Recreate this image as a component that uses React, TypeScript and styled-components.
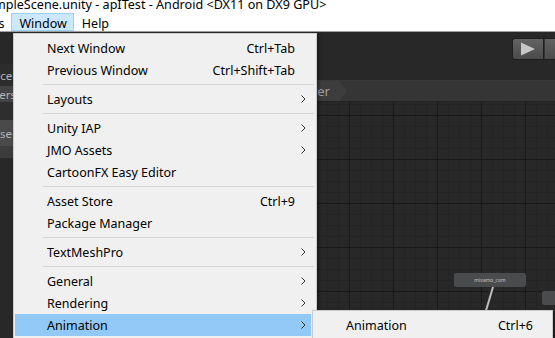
import styled, {createGlobalStyle} from 'styled-components';

const GlobalStyle = createGlobalStyle`
	html, body {
		margin: 0;
		padding: 0;
	}
	body {
		width: 555px;
		height: 338px;
		overflow: hidden;
		font-family: 'Noto Sans', 'Liberation Sans', sans-serif;
		font-size: 12.5px;
		color: #000;
	}
`;

interface MenuEntry {
	label?: string;
	shortcut?: string;
	sub?: boolean;
	active?: boolean;
	separator?: boolean;
}

const windowMenu: MenuEntry[] = [
	{label: 'Next Window', shortcut: 'Ctrl+Tab'},
	{label: 'Previous Window', shortcut: 'Ctrl+Shift+Tab'},
	{separator: true},
	{label: 'Layouts', sub: true},
	{separator: true},
	{label: 'Unity IAP', sub: true},
	{label: 'JMO Assets', sub: true},
	{label: 'CartoonFX Easy Editor'},
	{separator: true},
	{label: 'Asset Store', shortcut: 'Ctrl+9'},
	{label: 'Package Manager'},
	{separator: true},
	{label: 'TextMeshPro', sub: true},
	{separator: true},
	{label: 'General', sub: true},
	{label: 'Rendering', sub: true},
	{label: 'Animation', sub: true, active: true},
];

const Page = styled.div`
	position: relative;
	width: 555px;
	height: 338px;
	display: flex;
	flex-direction: column;
	overflow: hidden;
	background: #fff;
`;

const TitleBar = styled.div`
	height: 14px;
	line-height: 10px;
	font-size: 12.6px;
	white-space: nowrap;
	overflow: hidden;
	text-indent: -20px;
`;

const MenuBar = styled.div`
	height: 19px;
	display: flex;
	align-items: stretch;
	background: #fff;
	margin-left: -34px;
	padding-top: 1px;
	box-sizing: border-box;
`;

const MenuBarItem = styled.div<{$open?: boolean}>`
	padding: 2px 6px 0 7px;
	display: flex;
	align-items: center;
	border: 1px solid ${p => (p.$open ? '#99d1ff' : 'transparent')};
	background: ${p => (p.$open ? '#cce8ff' : 'transparent')};
`;

const Editor = styled.div`
	flex: 1;
	display: flex;
	background: #282828;
	border-top: 1px solid #a0a0a0;
`;

const SideStrip = styled.div`
	width: 13px;
	overflow: hidden;
	display: flex;
	flex-direction: column;
	font-size: 11.5px;
	color: #b4b4b4;
	background: #282828;
`;

const StripBand = styled.div<{$h: number; $bg: string; $indent?: number}>`
	height: ${p => p.$h}px;
	background: ${p => p.$bg};
	display: flex;
	align-items: center;
	white-space: nowrap;
	text-indent: ${p => p.$indent ?? 0}px;
`;

const Main = styled.div`
	flex: 1;
	display: flex;
	flex-direction: column;
`;

const Toolbar = styled.div`
	height: 49px;
	display: flex;
	justify-content: flex-end;
	align-items: flex-start;
	padding-top: 6px;
	box-sizing: border-box;
	background: #282828;
	border-bottom: 1px solid #3a3a3a;
	margin-right: -21px;
`;

const PlayButton = styled.div`
	width: 30px;
	height: 20px;
	border-radius: 3px 0 0 3px;
	background: linear-gradient(#626262, #4b4b4b);
	border: 1px solid #1e1e1e;
	display: flex;
	align-items: center;
	justify-content: center;
`;

const NextButton = styled(PlayButton)`
	border-radius: 0;
	border-left: 1px solid #333;
`;

const Breadcrumbs = styled.div`
	height: 20px;
	display: flex;
	background: #353535;
	border-bottom: 1px solid #242424;
`;

const Crumb = styled.div`
	position: relative;
	width: 326px;
	height: 20px;
	background: #3d3d3d;
	color: #a0a0a0;
	font-size: 13px;
	display: flex;
	align-items: center;
	justify-content: flex-end;
	padding-right: 9px;
	box-sizing: border-box;

	&::after {
		content: '';
		position: absolute;
		right: -8px;
		top: 0;
		border-top: 10px solid transparent;
		border-bottom: 10px solid transparent;
		border-left: 8px solid #3d3d3d;
	}
`;

const Graph = styled.div`
	position: relative;
	flex: 1;
	background-color: #282828;
	background-image:
		linear-gradient(to right, #1a1a1a 1px, transparent 1px),
		linear-gradient(to bottom, #1a1a1a 1px, transparent 1px),
		linear-gradient(to right, #242424 1px, transparent 1px),
		linear-gradient(to bottom, #242424 1px, transparent 1px);
	background-size: 44px 44px, 44px 44px, 11px 11px, 11px 11px;
	background-position: 28px 13px, 28px 13px, 6px 2px, 6px 2px;
`;

const StateNode = styled.div<{$x: number; $y: number; $w: number}>`
	position: absolute;
	left: ${p => p.$x}px;
	top: ${p => p.$y}px;
	width: ${p => p.$w}px;
	height: 14px;
	background: #4a4b4d;
	border-radius: 2px;
	color: #c4c4c4;
	font-size: 5px;
	display: flex;
	align-items: center;
	justify-content: center;
`;

const Transition = styled.svg`
	position: absolute;
	left: 470px;
	top: 184px;
`;

const Dropdown = styled.div<{$x: number; $y: number; $w: number}>`
	position: absolute;
	left: ${p => p.$x}px;
	top: ${p => p.$y}px;
	width: ${p => p.$w}px;
	box-sizing: border-box;
	background: #f0f0f0;
	border: 1px solid #cccccc;
	padding: 3px 5px 3px 1px;
	box-shadow: 2px 2px 3px rgba(0, 0, 0, 0.35);
`;

const Item = styled.div<{$active?: boolean; $arrowCol?: number}>`
	height: 22px;
	display: grid;
	grid-template-columns: 1fr auto ${p => p.$arrowCol ?? 16}px;
	align-items: center;
	padding-left: 32px;
	background: ${p => (p.$active ? '#91c9f7' : 'transparent')};
	white-space: nowrap;
`;

const Shortcut = styled.span`
	text-align: right;
`;

const Arrow = styled.span`
	display: flex;
	justify-content: center;
`;

const Separator = styled.div`
	height: 1px;
	margin: 3px -3px 3px 28px;
	background: #d5d5d5;
`;

const Chevron = () => (
	<svg width="5" height="8" viewBox="0 0 5 8">
		<path d="M0.5 0.5 L4 4 L0.5 7.5" fill="none" stroke="#333" strokeWidth="1" />
	</svg>
);

const App = () => {
	return (
		<Page>
			<GlobalStyle />
			<TitleBar>SampleScene.unity - apITest - Android &lt;DX11 on DX9 GPU&gt;</TitleBar>
			<MenuBar>
				<MenuBarItem>Tools</MenuBarItem>
				<MenuBarItem $open>Window</MenuBarItem>
				<MenuBarItem>Help</MenuBarItem>
			</MenuBar>
			<Editor>
				<SideStrip>
					<StripBand $h={32} $bg="#282828" />
					<StripBand $h={22} $bg="#2c2c2c" $indent={-6}>Scene</StripBand>
					<StripBand $h={16} $bg="#434343" $indent={-19}>Layers</StripBand>
					<StripBand $h={18} $bg="#2e2e2e" />
					<StripBand $h={26} $bg="#4a4a4a" $indent={-14}>Base Layer</StripBand>
					<StripBand $h={12} $bg="#3c3c3c" />
					<StripBand $h={180} $bg="#282828" />
				</SideStrip>
				<Main>
					<Toolbar>
						<PlayButton>
							<svg width="16" height="14" viewBox="0 0 16 14">
								<path d="M1 0.5 L15 7 L1 13.5 Z" fill="#c6c6c6" />
							</svg>
						</PlayButton>
						<NextButton />
					</Toolbar>
					<Breadcrumbs>
						<Crumb>Base Layer</Crumb>
					</Breadcrumbs>
					<Graph>
						<StateNode $x={441} $y={171} $w={72}>mixamo_com</StateNode>
						<StateNode $x={529} $y={189} $w={40} />
						<Transition width="20" height="30" viewBox="0 0 20 30">
							<path d="M10 1 L2 28" stroke="#bdbdbd" strokeWidth="2" />
						</Transition>
					</Graph>
				</Main>
			</Editor>
			<Dropdown $x={13} $y={33} $w={304}>
				{windowMenu.map((entry, i) =>
					entry.separator ? (
						<Separator key={i} />
					) : (
						<Item key={i} $active={entry.active}>
							<span>{entry.label}</span>
							<Shortcut>{entry.shortcut}</Shortcut>
							<Arrow>{entry.sub && <Chevron />}</Arrow>
						</Item>
					),
				)}
			</Dropdown>
			<Dropdown $x={312} $y={310} $w={241}>
				<Item $arrowCol={14}>
					<span>Animation</span>
					<Shortcut>Ctrl+6</Shortcut>
					<Arrow />
				</Item>
			</Dropdown>
		</Page>
	);
};

export default App;
